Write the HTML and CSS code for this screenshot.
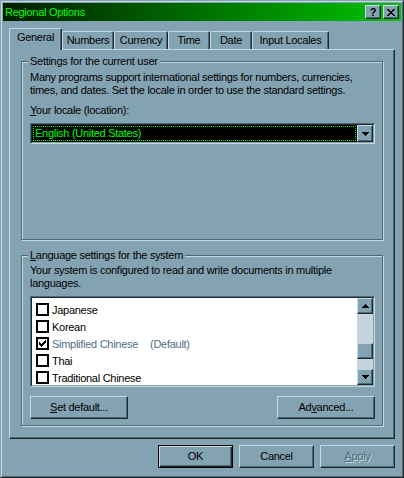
FILE: index.html
```html
<!DOCTYPE html>
<html>
<head>
<meta charset="utf-8">
<title>Regional Options</title>
<link rel="stylesheet" href="styles.css">
</head>
<body>
<div class="window">
  <div class="titlebar">
    <span class="title">Regional Options</span>
    <div class="tb-buttons">
      <div class="tb-btn raised">?</div>
      <div class="tb-btn raised">
        <svg width="8" height="7" viewBox="0 0 8 7" shape-rendering="crispEdges"><path d="M0 0h2v1h-2zM6 0h2v1h-2zM1 1h2v1h-2zM5 1h2v1h-2zM2 2h4v1h-4zM3 3h2v1h-2zM2 4h4v1h-4zM1 5h2v1h-2zM5 5h2v1h-2zM0 6h2v1h-2zM6 6h2v1h-2z" fill="#000"/></svg>
      </div>
    </div>
  </div>
  <div class="client">
    <div class="tabs">
      <div class="tab sel t-general">General</div>
      <div class="tab t-numbers">Numbers</div>
      <div class="tab t-currency">Currency</div>
      <div class="tab t-time">Time</div>
      <div class="tab t-date">Date</div>
      <div class="tab t-input">Input Locales</div>
    </div>
    <div class="panel">
      <fieldset class="group g1">
        <legend>Settings for the current user</legend>
        <p class="text">Many programs support international settings for numbers, currencies,<br>times, and dates. Set the locale in order to use the standard settings.</p>
        <div class="label"><u>Y</u>our locale (location):</div>
        <div class="combo">
          <div class="field"><div class="sel-text">English (United States)</div></div>
          <div class="drop raised">
            <svg width="7" height="4" viewBox="0 0 7 4" shape-rendering="crispEdges"><path d="M0 0h7v1h-7zM1 1h5v1h-5zM2 2h3v1h-3zM3 3h1v1h-1z" fill="#000"/></svg>
          </div>
        </div>
      </fieldset>
      <fieldset class="group g2">
        <legend><u>L</u>anguage settings for the system</legend>
        <p class="text">Your system is configured to read and write documents in multiple<br>languages.</p>
        <div class="listbox">
          <div class="items">
            <div class="row"><span class="cb"></span><span>Japanese</span></div>
            <div class="row"><span class="cb"></span><span>Korean</span></div>
            <div class="row dim"><span class="cb">
              <svg width="7" height="7" viewBox="0 0 7 7" shape-rendering="crispEdges"><path d="M6 0h1v1h-1zM5 1h2v1h-2zM0 2h1v1h-1zM4 2h3v1h-3zM0 3h2v1h-2zM3 3h3v1h-3zM0 4h5v1h-5zM1 5h3v1h-3zM2 6h1v1h-1z" fill="#000"/></svg>
            </span><span class="name">Simplified Chinese</span><span class="def">(Default)</span></div>
            <div class="row"><span class="cb"></span><span>Thai</span></div>
            <div class="row"><span class="cb"></span><span>Traditional Chinese</span></div>
          </div>
          <div class="scrollbar">
            <div class="sb-btn raised">
              <svg width="7" height="4" viewBox="0 0 7 4" shape-rendering="crispEdges"><path d="M3 0h1v1h-1zM2 1h3v1h-3zM1 2h5v1h-5zM0 3h7v1h-7z" fill="#000"/></svg>
            </div>
            <div class="sb-track"><div class="sb-thumb raised"></div></div>
            <div class="sb-btn raised">
              <svg width="7" height="4" viewBox="0 0 7 4" shape-rendering="crispEdges"><path d="M0 0h7v1h-7zM1 1h5v1h-5zM2 2h3v1h-3zM3 3h1v1h-1z" fill="#000"/></svg>
            </div>
          </div>
        </div>
        <div class="btn-row">
          <div class="btn raised"><u>S</u>et default...</div>
          <div class="btn raised">Ad<u>v</u>anced...</div>
        </div>
      </fieldset>
    </div>
    <div class="dlg-buttons">
      <div class="btn dlg default">OK</div>
      <div class="btn dlg raised">Cancel</div>
      <div class="btn dlg raised disabled"><u>A</u>pply</div>
    </div>
  </div>
</div>
</body>
</html>
```

FILE: styles.css
```css
:root {
  --face: #84a3b2;
  --hi: #c6d8e0;
  --sh: #4d6878;
  --dk: #22282c;
  --track: #c4d4dc;
}
* { box-sizing: border-box; }
html, body { margin: 0; padding: 0; }
body {
  width: 404px;
  height: 478px;
  overflow: hidden;
  background: var(--face);
  font-family: "Liberation Sans", Arial, sans-serif;
  font-size: 11px;
  letter-spacing: -0.28px;
  color: #000;
}
u { text-decoration: underline; text-underline-offset: 1px; }

.window {
  width: 404px;
  height: 478px;
  background: var(--face);
  border: 1px solid;
  border-color: var(--face) var(--dk) var(--dk) var(--face);
  box-shadow: inset 1px 1px 0 var(--hi), inset -1px -1px 0 var(--sh);
  padding: 2px;
}

.raised {
  background: var(--face);
  border: 1px solid;
  border-color: var(--hi) var(--dk) var(--dk) var(--hi);
  box-shadow: inset -1px -1px 0 var(--sh);
}

.titlebar {
  height: 18px;
  display: flex;
  align-items: center;
  background: linear-gradient(to right, #001c00, #00c400);
  padding-left: 2px;
}
.title { color: #00ff00; line-height: 18px; }
.tb-buttons { margin-left: auto; display: flex; gap: 2px; padding-right: 2px; }
.tb-btn {
  width: 16px;
  height: 14px;
  display: flex;
  align-items: center;
  justify-content: center;
  font-weight: bold;
  font-size: 11px;
  line-height: 12px;
}

.client { padding: 7px 6px 0 6px; }

.tabs { display: flex; align-items: flex-end; height: 21px; }
.tab {
  height: 18px;
  border: 1px solid;
  border-bottom: none;
  border-color: var(--hi) var(--dk) var(--dk) var(--hi);
  border-radius: 2px 2px 0 0;
  box-shadow: inset -1px 0 0 var(--sh);
  text-align: center;
  line-height: 13px;
  padding-top: 2px;
  white-space: nowrap;
}
.tab.sel {
  height: 22px;
  margin-bottom: -1px;
  position: relative;
  z-index: 1;
  background: var(--face);
}
.t-general { width: 53px; }
.t-numbers { width: 52px; }
.t-currency { width: 54px; }
.t-time { width: 42px; }
.t-date { width: 42px; }
.t-input { width: 77px; }

.panel {
  width: 386px;
  height: 390px;
  border: 1px solid;
  border-color: var(--hi) var(--dk) var(--dk) var(--hi);
  box-shadow: inset -1px -1px 0 var(--sh);
  padding: 5px 0 0 11px;
}

.group {
  margin: 0;
  width: 362px;
  border: 1px solid var(--sh);
  box-shadow: 1px 1px 0 var(--hi), inset 1px 1px 0 var(--hi);
  padding: 3px 7px 0 8px;
  min-width: 0;
}
.group legend {
  padding: 0 2px;
  margin-left: -2px;
  line-height: 13px;
  background: var(--face);
}
.g1 { height: 185px; }
.g2 { height: 177px; margin-top: 9px; padding-top: 2px; }

.text { margin: 0; line-height: 13px; white-space: nowrap; }
.label { margin-top: 7px; line-height: 13px; }

.combo {
  margin-top: 6px;
  width: 345px;
  height: 21px;
  display: flex;
  border: 1px solid;
  border-color: var(--sh) var(--hi) var(--hi) var(--sh);
  box-shadow: inset 1px 1px 0 var(--dk), inset -1px -1px 0 var(--face);
  padding: 1px;
  background: #fff;
}
.field { flex: 1; background: #000; padding: 1px; }
.sel-text {
  height: 100%;
  border: 1px dotted #00ff00;
  color: #00ff00;
  padding-left: 1px;
  line-height: 12px;
}
.drop {
  width: 16px;
  display: flex;
  align-items: center;
  justify-content: center;
}

.listbox {
  margin-top: 6px;
  width: 345px;
  height: 91px;
  display: flex;
  border: 1px solid;
  border-color: var(--sh) var(--hi) var(--hi) var(--sh);
  box-shadow: inset 1px 1px 0 var(--dk), inset -1px -1px 0 var(--face);
  padding: 1px;
}
.items { flex: 1; background: #fff; padding: 3px 0 0 4px; overflow: hidden; }
.row { height: 17px; display: flex; align-items: center; white-space: nowrap; }
.row.dim { color: #4d6f86; }
.cb {
  width: 13px;
  height: 13px;
  border: 2px solid #000;
  background: #fff;
  margin-right: 3px;
  display: flex;
  align-items: center;
  justify-content: center;
  flex: none;
}
.def { margin-left: 12px; }

.scrollbar { width: 16px; display: flex; flex-direction: column; background: var(--track); }
.sb-btn { height: 16px; display: flex; align-items: center; justify-content: center; }
.sb-track { flex: 1; padding-top: 29px; }
.sb-thumb { height: 16px; }

.btn-row { margin-top: 9px; display: flex; justify-content: space-between; width: 345px; }
.btn {
  width: 98px;
  height: 23px;
  display: flex;
  align-items: center;
  justify-content: center;
  line-height: 13px;
}
.dlg-buttons { display: flex; justify-content: flex-end; gap: 6px; margin-top: 6px; width: 386px; }
.btn.dlg { width: 75px; }
.btn.default {
  background: var(--face);
  border: 1px solid #000;
  box-shadow: inset 1px 1px 0 var(--hi), inset -1px -1px 0 var(--dk), inset -2px -2px 0 var(--sh);
}
.btn.disabled { color: var(--sh); text-shadow: 1px 1px 0 var(--hi); }
```
